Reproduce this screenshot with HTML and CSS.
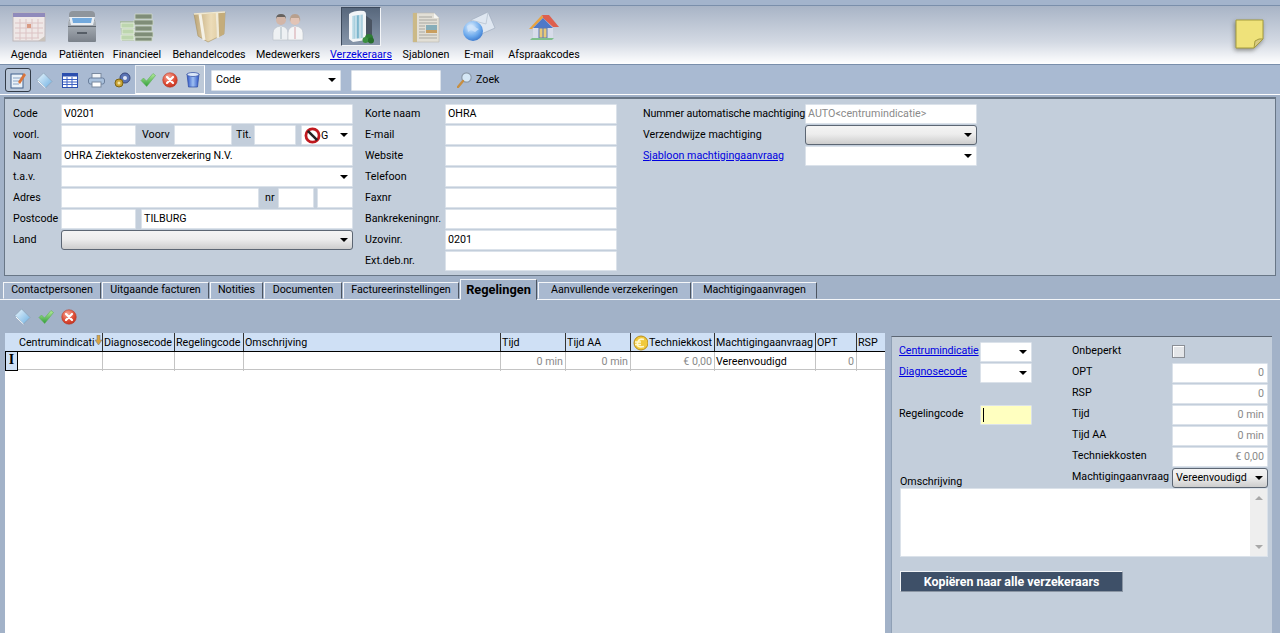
FILE: index.html
```html
<!DOCTYPE html>
<html lang="nl">
<head>
<meta charset="utf-8">
<title>Verzekeraars</title>
<link rel="stylesheet" href="styles.css">
</head>
<body>
<svg class="defs" width="0" height="0" aria-hidden="true">
  <defs>
    <linearGradient id="gGreen" x1="0" y1="0" x2="0" y2="1"><stop offset="0" stop-color="#b5ec9a"/><stop offset="1" stop-color="#2f9e3a"/></linearGradient>
    <radialGradient id="gRed" cx=".4" cy=".3" r=".8"><stop offset="0" stop-color="#f8a898"/><stop offset=".6" stop-color="#dd4a33"/><stop offset="1" stop-color="#b92f1c"/></radialGradient>
    <linearGradient id="gPane" x1="0" y1="0" x2="1" y2="1"><stop offset="0" stop-color="#eaf6fd"/><stop offset="1" stop-color="#6fb0e2"/></linearGradient>
    <linearGradient id="gBin" x1="0" y1="0" x2="1" y2="0"><stop offset="0" stop-color="#2c53c4"/><stop offset=".5" stop-color="#9fc0f2"/><stop offset="1" stop-color="#2c53c4"/></linearGradient>
    <linearGradient id="gCab" x1="0" y1="0" x2="0" y2="1"><stop offset="0" stop-color="#b0b6bd"/><stop offset="1" stop-color="#7a818a"/></linearGradient>
    <linearGradient id="gBox" x1="0" y1="0" x2="1" y2="0"><stop offset="0" stop-color="#bda678"/><stop offset=".55" stop-color="#ecdcb8"/><stop offset="1" stop-color="#d8c294"/></linearGradient>
    <radialGradient id="gGlobe" cx=".4" cy=".3" r=".8"><stop offset="0" stop-color="#dff0ff"/><stop offset=".6" stop-color="#6aa8ec"/><stop offset="1" stop-color="#2f6cc4"/></radialGradient>
    <linearGradient id="gBuild" x1="0" y1="0" x2="1" y2="0"><stop offset="0" stop-color="#cfe6ee"/><stop offset=".5" stop-color="#7db6cc"/><stop offset="1" stop-color="#bcd9e4"/></linearGradient>
    <symbol id="iCheck" viewBox="0 0 16 16"><path d="M1 8.5 3.5 6 6.5 9 13 1.5 15.5 3.5 6.7 14.5Z" fill="url(#gGreen)" stroke="#5fae5a" stroke-width=".6"/></symbol>
    <symbol id="iCross" viewBox="0 0 16 16"><circle cx="8" cy="8" r="7.3" fill="url(#gRed)" stroke="#b53a28" stroke-width=".5"/><path d="M5 5 11 11M11 5 5 11" stroke="#fff" stroke-width="2.2" stroke-linecap="round"/></symbol>
    <symbol id="iDiamond" viewBox="0 0 18 18"><path d="M1 8 8 1 17 10 10 17Z" fill="url(#gPane)" stroke="#8aa0b4" stroke-width=".7"/><path d="M2 9.5 10 17" stroke="#fff" stroke-width="1"/></symbol>
  </defs>
</svg>

<div class="strip"></div>

<header class="nav">
  <div class="nav-items">
    <a class="nav-item">
      <span class="nav-icon">
        <svg width="34" height="30" viewBox="0 0 34 30"><rect x="1" y="1" width="32" height="28" fill="#efe8e7" stroke="#bdb7ba"/><rect x="1" y="1" width="32" height="4" fill="#8f8abb"/><path d="M3 11H31M3 16H31M3 21H31M3 26H27M8 7V28M14 7V28M20 7V28M26 7V26" stroke="#dcc3c4" stroke-width="1"/><rect x="15" y="12" width="4" height="4" fill="#d99a82"/><path d="M26 29 33 29 33 24Z" fill="#c9c2bb"/></svg>
      </span>
      <span class="nav-label">Agenda</span>
    </a>
    <a class="nav-item">
      <span class="nav-icon">
        <svg width="32" height="33" viewBox="0 0 32 33"><path d="M3 5Q3 1 7 1H25Q29 1 29 5V12H3Z" fill="#8f959c"/><rect x="2" y="11" width="28" height="21" rx="1" fill="url(#gCab)"/><path d="M3 7H29L27 15H5Z" fill="#e8edf2"/><path d="M6 8H26L25 13H7Z" fill="#72a9dd"/><rect x="11" y="22" width="10" height="2" fill="#565d66"/><rect x="2" y="16" width="28" height="1" fill="#5e656e"/></svg>
      </span>
      <span class="nav-label">Patiënten</span>
    </a>
    <a class="nav-item">
      <span class="nav-icon">
        <svg width="34" height="30" viewBox="0 0 34 30"><path d="M0 9H14V29H2Z" fill="#a9bba5"/><path d="M15 2H32V7H15ZM14 8H33V13H14ZM15 14H32V19H15ZM14 20H33V25H14ZM15 25H32V29H15Z" fill="#7f8d78" stroke="#ced9c8" stroke-width=".8"/><path d="M1 11H14V16H1ZM2 17H14V22H2ZM1 23H14V28H1Z" fill="#bdd6ae" stroke="#e8f1e2" stroke-width=".8"/></svg>
      </span>
      <span class="nav-label">Financieel</span>
    </a>
    <a class="nav-item">
      <span class="nav-icon">
        <svg width="33" height="32" viewBox="0 0 33 32"><path d="M1 3 32 1 31 23 15 31 5 25Z" fill="url(#gBox)" stroke="#a8925f" stroke-width=".6"/><path d="M23 2 32 1 31 23 24 27Z" fill="#c4ac7a"/><path d="M7 3 11 29" stroke="#f4f1e6" stroke-width="3"/><path d="M24 2 25 27" stroke="#f0ead8" stroke-width="2.5"/><path d="M1 3 32 1" stroke="#f0e8d0" stroke-width="1.5"/></svg>
      </span>
      <span class="nav-label">Behandelcodes</span>
    </a>
    <a class="nav-item">
      <span class="nav-icon">
        <svg width="32" height="28" viewBox="0 0 32 28"><circle cx="9" cy="7" r="5" fill="#d2b6a8"/><path d="M4 6Q4 1 9 1T14 6L13 4H5Z" fill="#66625f"/><path d="M1 27V20Q1 14 9 13 16 14 16 20V27Z" fill="#eef1f3" stroke="#b9c0c7" stroke-width=".6"/><path d="M9 14V26" stroke="#a9b8c0"/><circle cx="23" cy="7" r="5" fill="#e2c4b6"/><path d="M18 9Q17 1 23 1T28 9L27 5H19Z" fill="#b8a08e"/><path d="M16 27V20Q16 14 23 13 31 14 31 20V27Z" fill="#f4f5f6" stroke="#b9c0c7" stroke-width=".6"/><path d="M23 14V26" stroke="#d5a3a8"/></svg>
      </span>
      <span class="nav-label">Medewerkers</span>
    </a>
    <a class="nav-item is-active">
      <span class="nav-icon">
        <svg width="28" height="34" viewBox="0 0 28 34"><path d="M18 5 25 10V28L18 31Z" fill="#4a5462"/><path d="M2 4Q8 0 17 1 19 2 19 4V30L6 32 2 29Z" fill="#f2f5f7"/><path d="M5 6 16 4.500V28L5 29Z" fill="url(#gBuild)"/><path d="M9 5.500V29M13 5V28" stroke="#eef6f9" stroke-width="1"/><circle cx="22" cy="28" r="4" fill="#2f7d35"/><circle cx="18.500" cy="30" r="3" fill="#3b8f40"/><circle cx="24" cy="30.500" r="3" fill="#276e2d"/></svg>
      </span>
      <span class="nav-label">Verzekeraars</span>
    </a>
    <a class="nav-item">
      <span class="nav-icon">
        <svg width="28" height="32" viewBox="0 0 28 32"><path d="M1 2H22L27 7V31H1Z" fill="#e2dfd6" stroke="#bdb9ae" stroke-width=".6"/><rect x="1" y="2" width="4" height="29" fill="#cbb987"/><path d="M7 6H20M7 9H25M7 12H25M7 15H13M7 18H13M7 21H13M7 24H25M7 27H25" stroke="#a8a7a1"/><rect x="14" y="14" width="11" height="8" fill="#86adb9"/><rect x="14" y="19" width="11" height="3" fill="#c99e5e"/><path d="M22 2V7H27Z" fill="#f6f6f2"/></svg>
      </span>
      <span class="nav-label">Sjablonen</span>
    </a>
    <a class="nav-item">
      <span class="nav-icon">
        <svg width="34" height="32" viewBox="0 0 34 32"><path d="M9 9 26 1 33 17 17 24Z" fill="#dfe7f1" stroke="#9aa8ba" stroke-width=".6"/><path d="M9 9 24 13 26 1" fill="none" stroke="#b8c4d2" stroke-width=".8"/><circle cx="11" cy="20" r="10" fill="url(#gGlobe)"/><path d="M5 15Q9 12 12 15T17 18L13 21 9 19 6 21Z" fill="#cfe4fa" opacity=".8"/></svg>
      </span>
      <span class="nav-label">E-mail</span>
    </a>
    <a class="nav-item">
      <span class="nav-icon">
        <svg width="32" height="26" viewBox="0 0 32 26"><path d="M5 13V24H25V13L15 4Z" fill="#d8dcea"/><path d="M14 1 21 1 31 13 25 13 15 4Z" fill="#de5f4e"/><path d="M1 15 14 1 15 4 4 15Z" fill="#e8a23f"/><path d="M15 4 5 14H25Z" fill="#4f79c9"/><rect x="11" y="14" width="8" height="10" fill="#e9c978" stroke="#5a79b7"/><path d="M15 14V24" stroke="#5a79b7"/><path d="M4 24H26L24 26H2Z" fill="#7fc08c"/></svg>
      </span>
      <span class="nav-label">Afspraakcodes</span>
    </a>
  </div>
  <div class="note"><svg width="29" height="30" viewBox="0 0 29 30"><path d="M1 1H28V20L19 29H1Z" fill="#efe27a" stroke="#a59c3c"/><path d="M19 29 20 22Q24 19 28 20Z" fill="#d8ca82" stroke="#a59c3c"/></svg></div>
</header>

<div class="toolbar">
  <div class="tool-group">
    <button class="tool is-on"><svg width="18" height="18" viewBox="0 0 18 18"><rect x="2" y="3" width="12" height="14" fill="#e9f1f8" stroke="#40608c"/><path d="M4 7H12M4 10H12M4 13H10" stroke="#8aa4c4"/><path d="M9 11 15 2 17 4 11 13Z" fill="#d9743a"/></svg></button>
    <button class="tool"><svg width="17" height="17"><use href="#iDiamond"/></svg></button>
    <button class="tool"><svg width="16" height="15" viewBox="0 0 16 15"><rect x=".5" y=".5" width="15" height="14" fill="#fff" stroke="#2b4fae"/><rect x=".5" y=".5" width="15" height="3" fill="#2b4fae"/><path d="M1 6.500H15M1 9H15M1 11.500H15M5 4V14M10 4V14" stroke="#3d63c4"/></svg></button>
    <button class="tool"><svg width="17" height="15" viewBox="0 0 17 15"><rect x="4" y="0.500" width="9" height="5" fill="#f2f5f8" stroke="#7a8aa0"/><rect x=".5" y="5" width="16" height="6" rx="2" fill="#a8c0dc" stroke="#6b7f9c"/><rect x="4" y="9" width="9" height="5" fill="#fff" stroke="#7a8aa0"/></svg></button>
    <button class="tool"><svg width="17" height="16" viewBox="0 0 17 16"><circle cx="11" cy="6" r="5" fill="#5a73b4" stroke="#38477c"/><circle cx="11" cy="6" r="2" fill="#dfe7f7"/><circle cx="5" cy="11" r="4" fill="#c9a334" stroke="#7a6316"/><circle cx="5" cy="11" r="1.500" fill="#f3e4a4"/></svg></button>
  </div>
  <div class="tool-set">
    <button class="tool"><svg width="16" height="16"><use href="#iCheck"/></svg></button>
    <button class="tool"><svg width="16" height="16"><use href="#iCross"/></svg></button>
    <button class="tool"><svg width="14" height="16" viewBox="0 0 14 16"><path d="M1 2H13L11.500 15H2.500Z" fill="url(#gBin)" stroke="#2c4aa0" stroke-width=".7"/><ellipse cx="7" cy="2.500" rx="6" ry="2" fill="#dbe7f8" stroke="#2c4aa0" stroke-width=".7"/></svg></button>
  </div>
  <div class="field select tb-select">Code<i class="caret"></i></div>
  <div class="field tb-input"></div>
  <div class="search"><svg width="15" height="16" viewBox="0 0 15 16"><circle cx="9.500" cy="5.500" r="4.700" fill="#d5e7f6" stroke="#8a98a8" stroke-width="1.200"/><path d="M6 9 1 15" stroke="#c68f43" stroke-width="2.400" stroke-linecap="round"/></svg><span>Zoek</span></div>
</div>
<div class="gap-line"></div>

<section class="form">
  <div class="col col-a">
    <div class="row"><label class="lbl">Code</label><div class="field grow">V0201</div></div>
    <div class="row"><label class="lbl">voorl.</label><div class="field w75"></div><label class="lbl-in l-voorv">Voorv</label><div class="field w58"></div><label class="lbl-in l-tit">Tit.</label><div class="field w42"></div><div class="field select w52 title-sel"><svg class="ban" width="17" height="17" viewBox="0 0 16 16"><circle cx="8" cy="8" r="6.200" fill="#fff" stroke="#c0191f" stroke-width="2.600"/><path d="M3.600 3.600 12.400 12.400" stroke="#222" stroke-width="2.400"/></svg>G<i class="caret"></i></div></div>
    <div class="row"><label class="lbl">Naam</label><div class="field grow">OHRA Ziektekostenverzekering N.V.</div></div>
    <div class="row"><label class="lbl">t.a.v.</label><div class="field select grow"><i class="caret"></i></div></div>
    <div class="row"><label class="lbl">Adres</label><div class="field w198"></div><label class="lbl-in l-nr">nr</label><div class="field w36"></div><div class="field w36 ml3"></div></div>
    <div class="row"><label class="lbl">Postcode</label><div class="field w75"></div><div class="field grow ml5">TILBURG</div></div>
    <div class="row"><label class="lbl">Land</label><div class="field select combo grow"><i class="caret"></i></div></div>
  </div>
  <div class="col col-b">
    <div class="row"><label class="lbl lbl-b">Korte naam</label><div class="field grow">OHRA</div></div>
    <div class="row"><label class="lbl lbl-b">E-mail</label><div class="field grow"></div></div>
    <div class="row"><label class="lbl lbl-b">Website</label><div class="field grow"></div></div>
    <div class="row"><label class="lbl lbl-b">Telefoon</label><div class="field grow"></div></div>
    <div class="row"><label class="lbl lbl-b">Faxnr</label><div class="field grow"></div></div>
    <div class="row"><label class="lbl lbl-b">Bankrekeningnr.</label><div class="field grow"></div></div>
    <div class="row"><label class="lbl lbl-b">Uzovinr.</label><div class="field grow">0201</div></div>
    <div class="row"><label class="lbl lbl-b">Ext.deb.nr.</label><div class="field grow"></div></div>
  </div>
  <div class="col col-c">
    <div class="row"><label class="lbl lbl-c tight">Nummer automatische machtiging</label><div class="field grow muted">AUTO&lt;centrumindicatie&gt;</div></div>
    <div class="row"><label class="lbl lbl-c">Verzendwijze machtiging</label><div class="field select combo grow"><i class="caret"></i></div></div>
    <div class="row"><a class="lbl lbl-c link">Sjabloon machtigingaanvraag</a><div class="field select grow"><i class="caret"></i></div></div>
  </div>
</section>

<nav class="tabs">
  <div class="tab">Contactpersonen</div>
  <div class="tab">Uitgaande facturen</div>
  <div class="tab">Notities</div>
  <div class="tab">Documenten</div>
  <div class="tab">Factureerinstellingen</div>
  <div class="tab tab-active">Regelingen</div>
  <div class="tab">Aanvullende verzekeringen</div>
  <div class="tab">Machtigingaanvragen</div>
</nav>

<main class="content">
  <div class="subbar">
    <svg width="17" height="17"><use href="#iDiamond"/></svg>
    <svg width="16" height="16"><use href="#iCheck"/></svg>
    <svg width="16" height="16"><use href="#iCross"/></svg>
  </div>
  <div class="split">
    <div class="table">
      <div class="thead">
        <div class="th th-ind"></div>
        <div class="th">Centrumindicati<svg class="sort" width="7" height="10" viewBox="0 0 7 10"><path d="M2 0H5V5H7L3.500 10 0 5H2Z" fill="#d9a441" stroke="#7a7f8c" stroke-width=".6"/></svg></div>
        <div class="th">Diagnosecode</div>
        <div class="th">Regelingcode</div>
        <div class="th">Omschrijving</div>
        <div class="th">Tijd</div>
        <div class="th">Tijd AA</div>
        <div class="th th-euro"><svg width="16" height="16" viewBox="0 0 16 16"><ellipse cx="9" cy="8" rx="7" ry="7" fill="#f0c93c" stroke="#b88d1a"/><path d="M12 4.500Q7 3 5.500 8T12 11.500M3 7H9M3 9.500H9" fill="none" stroke="#fff7c8" stroke-width="1.600"/></svg>Techniekkost</div>
        <div class="th">Machtigingaanvraag</div>
        <div class="th">OPT</div>
        <div class="th">RSP</div>
      </div>
      <div class="trow">
        <div class="td td-ind">I</div>
        <div class="td"></div>
        <div class="td"></div>
        <div class="td"></div>
        <div class="td"></div>
        <div class="td num">0 min</div>
        <div class="td num">0 min</div>
        <div class="td num">€ 0,00</div>
        <div class="td">Vereenvoudigd</div>
        <div class="td num">0</div>
        <div class="td"></div>
      </div>
    </div>
    <aside class="side">
      <div class="side-grid">
        <a class="s-a link tight">Centrumindicatie</a>
        <div class="field select s-b"><i class="caret"></i></div>
        <span class="s-c">Onbeperkt</span>
        <div class="s-d s-check"><span class="check"></span></div>

        <a class="s-a link">Diagnosecode</a>
        <div class="field select s-b"><i class="caret"></i></div>
        <span class="s-c">OPT</span>
        <div class="field num muted s-d">0</div>

        <span class="s-c r3">RSP</span>
        <div class="field num muted s-d r3">0</div>

        <span class="s-a r4">Regelingcode</span>
        <div class="field s-b r4 yellow"><i class="cursor"></i></div>
        <span class="s-c r4">Tijd</span>
        <div class="field num muted s-d r4">0 min</div>

        <span class="s-c r5">Tijd AA</span>
        <div class="field num muted s-d r5">0 min</div>

        <span class="s-c r6">Techniekkosten</span>
        <div class="field num muted s-d r6">€ 0,00</div>

        <span class="s-om">Omschrijving</span>
        <span class="s-c r7">Machtigingaanvraag</span>
        <div class="field select combo combo-v s-d r7">Vereenvoudigd<i class="caret"></i></div>
      </div>
      <div class="memo">
        <div class="scroll"><i class="up"></i><i class="down"></i></div>
      </div>
      <button class="copy">Kopiëren naar alle verzekeraars</button>
    </aside>
  </div>
</main>
</body>
</html>
```
FILE: styles.css
```css
* { box-sizing: border-box; }
html, body { margin: 0; height: 633px; overflow: hidden; }
body { background: #a2b2c8; font: 10.7px/1.1 Roboto, "Liberation Sans", sans-serif; color: #000; }
.defs { position: absolute; }
button { font: inherit; padding: 0; margin: 0; border: 0; background: none; }
.tight { letter-spacing: -.1px; }

.strip { height: 6px; background: #a3b4cc; border-bottom: 1px solid #7a8fab; }

.nav { height: 59px; display: flex; background: linear-gradient(#a8b4c6, #d3d9e3 62%, #fff); border-bottom: 1px solid #7a8fab; }
.nav-items { display: grid; grid-template-columns: 48px 57px 54px 90px 68px 78px 52px 54px 76px; margin-left: 5px; }
.nav-item { display: flex; flex-direction: column; align-items: center; justify-content: flex-start; }
.nav-icon { height: 39px; width: 40px; margin-top: 1px; display: flex; align-items: center; justify-content: center; }
.nav-label { margin-top: 3px; white-space: nowrap; }
.nav-item.is-active .nav-icon { background: linear-gradient(#57677c, #8796aa); border: 1px solid; border-color: #3d4a5c #f2f4f7 #f2f4f7 #3d4a5c; }
.nav-item.is-active .nav-label { color: #0000e0; text-decoration: underline; }
.note { margin-left: auto; margin-right: 16px; margin-top: 13px; filter: drop-shadow(-1px 2px 2px rgba(70,70,60,.55)); }

.toolbar { height: 30px; display: flex; align-items: center; padding: 1px 0 0 5px; background: #a9bad2; border-bottom: 1px solid #fff; }
.tool-group { display: flex; align-items: center; width: 130px; }
.tool { width: 26px; height: 24px; flex: none; display: flex; align-items: center; justify-content: center; }
.tool.is-on { background: #b8c6d8; border: 1px solid #333c48; border-radius: 3px; }
.tool-set { display: flex; align-items: center; justify-content: center; width: 70px; height: 29px; margin-top: -1px; background: #bdc9d8; border: 1px solid; border-color: #e8edf3 #fff #fff #e8edf3; }
.tool-set .tool { width: 22.5px; }

.field { height: 20px; background: #fff; border: 1px solid #dbe2ea; border-radius: 1px; padding: 0 2px; line-height: 17px; white-space: nowrap; position: relative; flex: none; }
.grow { flex: 1; min-width: 0; }
.select { padding-right: 16px; }
.caret { position: absolute; right: 4px; top: 7px; border: 4px solid transparent; border-top: 4px solid #000; border-bottom: 0; }
.combo { background: linear-gradient(#f4f4f4, #ededed 45%, #cdcdcd); border: 1px solid #5c6673; border-radius: 3px; }
.tb-select { width: 130px; height: 21px; margin-left: 6px; padding-left: 4px; line-height: 18px; }
.tb-input { width: 90px; margin-left: 10px; height: 21px; }
.search { display: flex; align-items: center; gap: 4px; margin-left: 16px; }

.gap-line { height: 2px; }

.form { margin: 0 4px; height: 179px; display: flex; padding: 5px 0 0 8px; background: #c3cedb; border: 1px solid #687686; border-top-width: 2px; }
.col-a { width: 340px; }
.col-b { width: 252px; margin-left: 12px; }
.col-c { width: 334px; margin-left: 26px; }
.row { display: flex; align-items: center; height: 20px; margin-bottom: 1px; }
.lbl { flex: none; width: 48px; white-space: nowrap; padding-bottom: 1px; }
.lbl-b { width: 80px; }
.lbl-c { width: 162px; }
.lbl-in { flex: none; white-space: nowrap; padding-bottom: 1px; }
.l-voorv { width: 38px; padding-left: 6px; }
.l-tit { width: 22px; padding-left: 4px; }
.l-nr { width: 19px; padding-left: 6px; }
.w75 { width: 75px; }
.w58 { width: 58px; }
.w42 { width: 42px; }
.w52 { width: 52px; margin-left: 5px; }
.w198 { width: 198px; }
.w36 { width: 36px; }
.ml3 { margin-left: 3px; }
.ml5 { margin-left: 5px; }
.title-sel { display: flex; align-items: center; gap: 0; padding-left: 2px; }
.ban { flex: none; }
.muted { color: #8a8a8a; }
.link { color: #0000e0; text-decoration: underline; }

.tabs { height: 20px; margin-top: 3px; padding-left: 3px; display: grid; grid-template-columns: 98px 107px 53px 78px 116px 77px 153px 125px; column-gap: 1px; align-items: end; }
.tab { height: 17px; line-height: 14px; text-align: center; white-space: nowrap; background: #a9b9d0; border: 1px solid; border-color: #f4f6f9 #4c5561 transparent #f4f6f9; }
.tab-active { height: 21px; background: #a2b2c8; border-color: #f4f6f9 #4c5561 #a2b2c8 #f4f6f9; font-weight: 700; font-size: 12.8px; line-height: 19px; margin-bottom: -1px; position: relative; }

.content { height: 334px; border-top: 1px solid #f4f6f9; }
.subbar { height: 33px; padding-left: 14px; display: flex; align-items: center; gap: 7px; }
.split { display: flex; height: 300px; }
.table { width: 880px; margin-left: 5px; background: #fff; }
.thead, .trow { display: grid; grid-template-columns: 13px 85px 72px 69px 257px 65px 65px 84px 101px 41px 28px; }
.thead { height: 19px; background: #cfe0f5; border-bottom: 1px solid #000; }
.th { border-right: 1px solid #333; padding: 1px 0 0 1px; line-height: 18px; white-space: nowrap; display: flex; align-items: center; overflow: hidden; }
.th:last-child { border-right: 0; }
.th-ind { border-right-color: #cfe0f5; }
.th-euro { gap: 1px; }
.sort { margin-top: -6px; flex: none; }
.trow { height: 18px; border-bottom: 1px solid #c4c4c4; }
.td { border-right: 1px solid #c4c4c4; padding: 0 1px; line-height: 19px; white-space: nowrap; }
.td:last-child { border-right: 0; }
.td-ind { background: #cfe0f5; border: 1px solid #000; border-top: 0; font: 700 14px/16px "Liberation Serif", serif; text-align: center; }
.num { text-align: right; color: #8a8a8a; }
.field.num { padding-right: 3px; }
.td.num { padding-right: 2px; }

.side { width: 381px; margin: 3px 0 0 6px; height: 297px; background: #c3cedb; border-top: 1px solid #5c6673; border-left: 1px solid #8fa0b5; padding: 4px 4px 0 7px; }
.side-grid { display: grid; grid-template-columns: 81px 52px 40px 100px 96px; grid-auto-rows: 21px; align-items: center; }
.s-a { grid-column: 1; padding-bottom: 1px; white-space: nowrap; }
.s-b { grid-column: 2; height: 20px; }
.s-c { grid-column: 4; white-space: nowrap; padding-bottom: 1px; }
.s-d { grid-column: 5; height: 20px; }
.s-check { padding-top: 3px; }
.r3 { grid-row: 3; }
.r4 { grid-row: 4; }
.r5 { grid-row: 5; }
.r6 { grid-row: 6; }
.r7 { grid-row: 7; }
.s-om { grid-row: 7; grid-column: 1 / 3; align-self: end; padding-left: 1px; }
.yellow { background: #ffffc0; }
.cursor { position: absolute; left: 2px; top: 2px; width: 1px; height: 14px; background: #000; }
.check { display: block; width: 13px; height: 13px; background: #e4e6e9; border: 1px solid #8b8f96; box-shadow: inset 1px 1px 0 #fff; }
.combo-v { padding-left: 3px; }
.memo { height: 69px; margin-left: 1px; width: 368px; background: #fff; border: 1px solid #dbe2ea; position: relative; }
.scroll { position: absolute; right: 0; top: 0; bottom: 0; width: 17px; background: #eeeeee; }
.up, .down { position: absolute; left: 5px; border: 4px solid transparent; }
.up { top: 7px; border-bottom-color: #a8a8a8; border-top: 0; }
.down { bottom: 7px; border-top-color: #a8a8a8; border-bottom: 0; }
.copy { display: block; width: 223px; height: 21px; margin: 14px 0 0 1px; background: #3e5068; color: #fff; font-weight: 700; font-size: 12.4px; border: 1px solid; border-color: #f0f3f6 #8a95a3 #8a95a3 #f0f3f6; }
```
